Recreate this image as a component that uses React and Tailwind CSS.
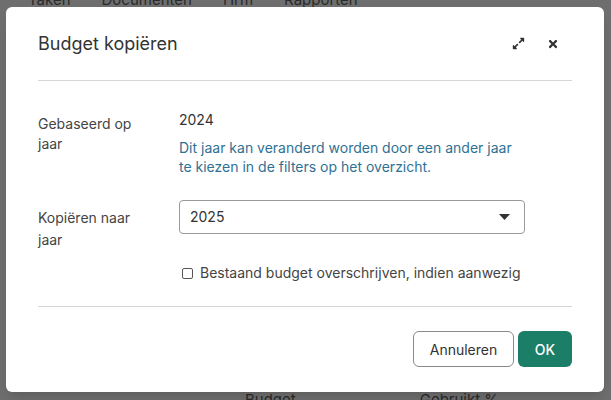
import React from 'react';
import { FaExpandAlt, FaTimes } from 'react-icons/fa';

const font = { fontFamily: 'Inter, "Noto Sans", sans-serif' };

export default function App() {
    return (
        <div className="relative w-[611px] h-[400px] overflow-hidden bg-[#6e6e6e]" style={font}>
            {/* Page behind the overlay */}
            <div className="flex gap-[31px] pl-[28px] -mt-[11px] text-[15px] text-[#2a2a2a]">
                <span>Taken</span>
                <span>Documenten</span>
                <span>Hrm</span>
                <span>Rapporten</span>
            </div>
            <div className="absolute left-0 right-0 bottom-[-11px] flex text-[15px] text-[#2a2a2a]">
                <span className="ml-[245px]">Budget</span>
                <span className="ml-[124px]">Gebruikt %</span>
            </div>

            {/* Modal */}
            <div className="absolute left-[6px] top-[7px] w-[598px] h-[385px] rounded-[6px] bg-white shadow-lg px-8 flex flex-col">
                <div className="flex items-center justify-between h-[74px] border-b border-[#d6d6d6]">
                    <h2 className="text-[18px] text-[#333]">Budget kopiëren</h2>
                    <div className="flex items-center gap-[22px] pr-[13px] text-[#333]">
                        <FaExpandAlt className="w-[13px] h-[13px]" />
                        <FaTimes className="w-[12px] h-[12px]" />
                    </div>
                </div>

                <div className="flex flex-col pt-[29px] h-[226px] border-b border-[#d6d6d6] text-[14px]">
                    <div className="grid grid-cols-[141px_1fr] leading-[20px]">
                        <div className="text-[#444] pt-[4px] pr-4">Gebaseerd op<br />jaar</div>
                        <div>
                            <div className="text-[#333]">2024</div>
                            <div className="mt-[8px] text-[#2f7193] leading-[19px] w-[340px]">
                                Dit jaar kan veranderd worden door een ander jaar te kiezen in de filters op het overzicht.
                            </div>
                        </div>
                    </div>

                    <div className="grid grid-cols-[141px_1fr] mt-[24px] leading-[22px]">
                        <div className="text-[#444] pt-[7px]">Kopiëren naar<br />jaar</div>
                        <div>
                            <div className="flex items-center justify-between w-[346px] h-[34px] rounded-[4px] border border-[#9a9a9a] pl-[10px] pr-[14px] text-[#333]">
                                <span>2025</span>
                                <svg width="11" height="6" viewBox="0 0 11 6"><path d="M0 0h11L5.5 6z" fill="#333" /></svg>
                            </div>
                            <label className="flex items-center gap-[7px] mt-[28px] ml-[3px] text-[#444]">
                                <span className="w-[11px] h-[11px] rounded-[2px] border border-[#555] bg-white" />
                                <span>Bestaand budget overschrijven, indien aanwezig</span>
                            </label>
                        </div>
                    </div>
                </div>

                <div className="flex justify-end gap-[4px] pt-[24px]">
                    <button className="w-[101px] h-[36px] rounded-[6px] border border-[#8a8a8a] bg-white text-[14px] text-[#333]">Annuleren</button>
                    <button className="w-[54px] h-[36px] rounded-[6px] bg-[#1b7e67] text-[14px] font-medium text-white">OK</button>
                </div>
            </div>
        </div>
    );
}
